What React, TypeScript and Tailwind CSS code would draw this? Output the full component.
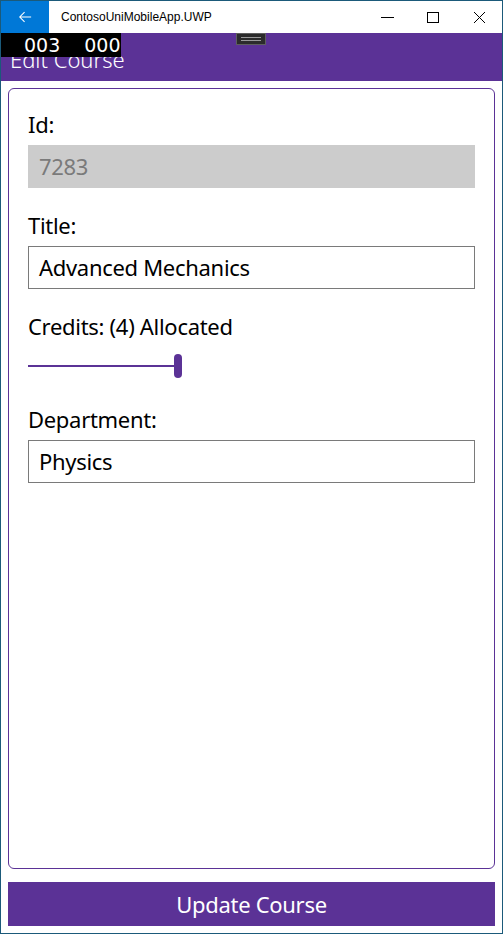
/**
 * Edit Course page (UWP window chrome + form)
 */
const PURPLE = "bg-[#5b3296]";

function Field({ label, value, disabled }: { label: string; value: string; disabled?: boolean }) {
  return (
    <div className="flex flex-col">
      <label className="text-[22px] leading-[30px] tracking-[-0.3px] text-black">{label}</label>
      {disabled ? (
        <div className="mt-[6px] h-[43px] bg-[#cccccc] px-[11px] flex items-center text-[22px] tracking-[-0.3px] text-[#7a7a7a]">
          {value}
        </div>
      ) : (
        <div className="mt-[6px] h-[43px] border border-[#7a7a7a] px-[10px] flex items-center text-[22px] tracking-[-0.3px] text-black">
          {value}
        </div>
      )}
    </div>
  );
}

export default function App() {
  return (
    <div
      className="w-[503px] h-[934px] border border-[#1b5a7a] bg-white flex flex-col overflow-hidden"
      style={{ fontFamily: '"Noto Sans", "Open Sans", sans-serif' }}
    >
      {/* Title bar */}
      <div className="h-[32px] flex items-center shrink-0">
        <div className="w-[48px] h-full bg-[#0078d7] flex items-center justify-center">
          <svg className="w-[14px] h-[14px]" viewBox="0 0 16 16" fill="none" stroke="white" strokeWidth={1.2}>
            <path d="M15 8H2M7.5 2.5L2 8l5.5 5.5" />
          </svg>
        </div>
        <span className="ml-[12px] text-[12px] text-black" style={{ fontFamily: '"Liberation Sans", sans-serif' }}>
          ContosoUniMobileApp.UWP
        </span>
        <div className="ml-auto flex h-full">
          <div className="w-[46px] flex items-center justify-center">
            <div className="w-[13px] h-px bg-black" />
          </div>
          <div className="w-[46px] flex items-center justify-center">
            <div className="w-[12px] h-[11px] border border-black" />
          </div>
          <div className="w-[46px] flex items-center justify-center">
            <svg className="w-[13px] h-[13px]" viewBox="0 0 13 13" stroke="black" strokeWidth={1}>
              <path d="M1 1l11 11M12 1L1 12" />
            </svg>
          </div>
        </div>
      </div>

      {/* Purple header */}
      <div className={`h-[48px] shrink-0 relative ${PURPLE} flex items-end pl-[9px]`}>
        <span className="text-[22px] leading-[30px] text-white font-light mb-[7px]">Edit Course</span>
        {/* frame counter overlay */}
        <div
          className="absolute left-[-1px] top-0 w-[121px] h-[24px] bg-black text-white text-[19px] leading-[24px] flex"
          style={{ fontFamily: '"DejaVu Sans", sans-serif' }}
        >
          <span className="ml-[24px]">003</span>
          <span className="ml-[24px]">000</span>
        </div>
        {/* drag handle */}
        <div className="absolute left-[235px] top-0 w-[30px] h-[12px] bg-[#2b2b2b] border border-[#5e5e5e] flex flex-col items-center justify-center gap-[2px]">
          <div className="w-[20px] h-px bg-[#9a9a9a]" />
          <div className="w-[20px] h-px bg-[#9a9a9a]" />
        </div>
      </div>

      {/* Content */}
      <div className="flex-1 flex flex-col px-[7px] pt-[7px] pb-[7px]">
        <div className="flex-1 border border-[#5b3296] rounded-[6px] px-[19px] pt-[20px]">
          <Field label="Id:" value="7283" disabled />
          <div className="mt-[22px]">
            <Field label="Title:" value="Advanced Mechanics" />
          </div>
          <div className="mt-[22px] flex flex-col">
            <label className="text-[22px] leading-[30px] tracking-[-0.3px] text-black">Credits: (4) Allocated</label>
            <div className="mt-[13px] h-[24px] w-[154px] flex items-center">
              <div className="flex-1 h-[2px] bg-[#5b3296]" />
              <div className="w-[8px] h-[24px] rounded-full bg-[#5b3296]" />
            </div>
          </div>
          <div className="mt-[26px]">
            <Field label="Department:" value="Physics" />
          </div>
        </div>
        <button className={`mt-[13px] h-[44px] ${PURPLE} text-white text-[22px] tracking-[-0.3px] flex items-center justify-center`}>
          Update Course
        </button>
      </div>
    </div>
  );
}
